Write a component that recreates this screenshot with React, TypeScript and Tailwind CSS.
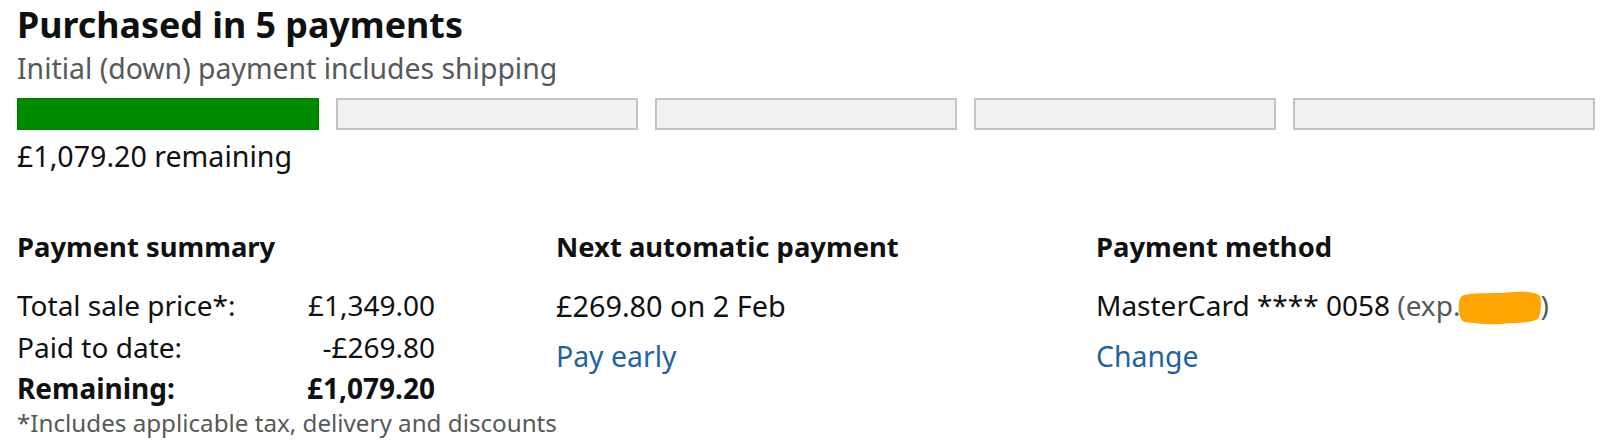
import React from "react";

const font = { fontFamily: '"Noto Sans", "Open Sans", Arial, sans-serif' };

function Bar({ filled }: { filled: boolean }) {
  return filled ? (
    <div className="h-[32px] w-[302px] shrink-0 border border-[#007a00] bg-[#008a00]" />
  ) : (
    <div className="h-[32px] w-[302px] shrink-0 border-2 border-[#c4c4c4] bg-[#f1f1f1]" />
  );
}

export default function App() {
  return (
    <div className="h-[443px] w-[1600px] overflow-hidden bg-white pl-[17px] pt-[2px] text-[#0f1111]" style={font}>
      <h1 className="text-[35.8px] font-bold leading-[44px]">Purchased in 5 payments</h1>
      <div className="mt-[4px] text-[28.4px] leading-[36px] text-[#565959]">
        Initial (down) payment includes shipping
      </div>
      <div className="mt-[12px] flex gap-[17px]">
        <Bar filled />
        <Bar filled={false} />
        <Bar filled={false} />
        <Bar filled={false} />
        <Bar filled={false} />
      </div>
      <div className="mt-[8px] text-[28.6px] leading-[36px]">£1,079.20 remaining</div>

      <div className="mt-[55px] grid grid-cols-[539px_540px_1fr] text-[28px]">
        <div>
          <div className="text-[27.4px] font-bold leading-[36px]">Payment summary</div>
          <div className="mt-[20px] w-[418px] leading-[41.5px]">
            <div className="flex justify-between">
              <span>Total sale price*:</span>
              <span>£1,349.00</span>
            </div>
            <div className="flex justify-between">
              <span>Paid to date:</span>
              <span>-£269.80</span>
            </div>
            <div className="flex justify-between font-bold">
              <span>Remaining:</span>
              <span>£1,079.20</span>
            </div>
          </div>
          <div className="whitespace-nowrap text-[24.2px] leading-[26px] text-[#565959]">
            *Includes applicable tax, delivery and discounts
          </div>
        </div>
        <div>
          <div className="text-[27.4px] font-bold leading-[36px]">Next automatic payment</div>
          <div className="mt-[20px] text-[28.8px] leading-[41.5px]">£269.80 on 2 Feb</div>
          <div className="mt-[9px] text-[28.4px] leading-[41.5px] text-[#2162a1]">Pay early</div>
        </div>
        <div>
          <div className="text-[27.4px] font-bold leading-[36px]">Payment method</div>
          <div className="mt-[20px] flex items-start whitespace-nowrap leading-[41.5px]">
            <span>MasterCard **** 0058&nbsp;</span>
            <span className="text-[#565959]">(exp.</span>
            <svg width="84" height="34" viewBox="0 0 84 34" className="-ml-[2px] mt-[6px] shrink-0">
              <path
                d="M6 4 C20 1 40 3 56 1 C66 0 78 1 82 5 C84 12 83 22 80 28 C70 33 56 31 44 33 C30 34 16 32 6 31 C1 27 0 18 1 11 C2 7 3 5 6 4 Z"
                fill="#ffa500"
              />
            </svg>
            <span className="-ml-[2px] text-[#565959]">)</span>
          </div>
          <div className="mt-[9px] text-[28.4px] leading-[41.5px] text-[#2162a1]">Change</div>
        </div>
      </div>
    </div>
  );
}
